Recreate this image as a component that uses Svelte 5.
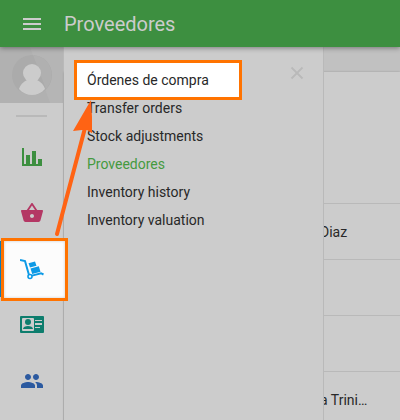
<script>
  const menu = [
    'Órdenes de compra',
    'Transfer orders',
    'Stock adjustments',
    'Proveedores',
    'Inventory history',
    'Inventory valuation'
  ];
  const suppliers = ['Diaz', '', '', 'a Trini…'];

  let current = $state('Proveedores');
</script>

<div class="app">
  <header>
    <button class="burger" aria-label="Menu">
      <svg width="24" height="24" viewBox="0 0 24 24"><path d="M3 6h18v2H3zM3 11h18v2H3zM3 16h18v2H3z" fill="#cccccc" /></svg>
    </button>
    <h1>Proveedores</h1>
  </header>

  <div class="body">
    <nav class="rail" aria-label="Sections">
      <a class="profile" href="#profile" aria-label="Profile">
        <svg width="63" height="56" viewBox="0 0 63 56">
          <rect width="63" height="56" fill="#b1b1b1" />
          <path d="M30 0h33v56H50z" fill="#b5b5b5" />
          <circle cx="32" cy="28" r="20" fill="#ababab" />
          <path d="M33 8a20 20 0 0 1 13 34z" fill="#b0b0b0" />
          <circle cx="32" cy="26" r="9" fill="#cccccc" />
          <path d="M27 33h10c4 2 7 5 8 9c-7 8 -19 8 -26 0c1 -4 4 -7 8 -9z" fill="#cccccc" />
        </svg>
      </a>
      <hr />
      <a class="item" href="#reports" aria-label="Reports">
        <svg width="24" height="24" viewBox="0 0 24 24" fill="#3d8f40"><path d="M2 3h2v16h18v2H2zM6 10h4v9H6zM12 6h4v13h-4zM18 14h4v5h-4z" /></svg>
      </a>
      <a class="item" href="#items" aria-label="Items">
        <svg width="24" height="24" viewBox="0 0 24 24" fill="#b43764"><path d="M17.21 9l-4.38-6.56c-.19-.28-.51-.42-.83-.42-.32 0-.64.14-.83.43L6.79 9H2c-.55 0-1 .45-1 1 0 .09.01.18.04.27l2.54 9.27c.23.84 1 1.46 1.92 1.46h13c.92 0 1.69-.62 1.93-1.46l2.54-9.27L23 10c0-.55-.45-1-1-1h-4.79zM9 9l3-4.4L15 9H9zm3 8c-1.1 0-2-.9-2-2s.9-2 2-2 2 .9 2 2-.9 2-2 2z" /></svg>
      </a>
      <a class="item selected" href="#inventory" aria-label="Inventory">
        <svg width="24" height="24" viewBox="0 0 24 24" fill="#0d9ae6">
          <path d="M0 3l5 1 4 14" fill="none" stroke="#0d9ae6" stroke-width="2" />
          <path d="M8.500 6.200l6.500-1.700 1.500 4.200-6.500 1.700zM10.500 11.500l8.300-2.300 1.700 5.600-8.300 2.200z" />
          <circle cx="10" cy="19.500" r="2" fill="none" stroke="#0d9ae6" stroke-width="1.600" />
          <path d="M12 18.600l9-2.400 2.500 1.300" fill="none" stroke="#0d9ae6" stroke-width="2" />
        </svg>
      </a>
      <a class="item" href="#employees" aria-label="Employees">
        <svg width="24" height="24" viewBox="0 0 24 24">
          <rect y="3" width="24" height="17" rx="1" fill="#0d7d6d" />
          <rect x="2" y="5" width="12" height="13" rx="1" fill="#cccccc" />
          <circle cx="8" cy="9" r="3" fill="#0d7d6d" />
          <path d="M3 16c0-4 10-4 10 0z" fill="#0d7d6d" />
          <path d="M15 7h7v1h-7zM15 10h7v2h-7zM15 14h5v1h-5z" fill="#cccccc" />
        </svg>
      </a>
      <a class="item" href="#customers" aria-label="Customers">
        <svg width="24" height="24" viewBox="0 0 24 24" fill="#2c5aa0"><path d="M16 11c1.660 0 2.990-1.340 2.990-3S17.660 5 16 5c-1.660 0-3 1.340-3 3s1.340 3 3 3zm-8 0c1.660 0 2.990-1.340 2.990-3S9.660 5 8 5C6.340 5 5 6.340 5 8s1.340 3 3 3zm0 2c-2.330 0-7 1.170-7 3.500V19h14v-2.500c0-2.330-4.670-3.500-7-3.500zm8 0c-.29 0-.62.02-.97.05 1.160.84 1.970 1.970 1.970 3.450V19h6v-2.500c0-2.330-4.670-3.500-7-3.500z" /></svg>
      </a>
    </nav>

    <main>
      <div class="card">
        <div class="toolbar"></div>
        <table aria-label="Proveedores">
          <tbody>
            {#each suppliers as name}
              <tr><td>{name}</td></tr>
            {/each}
          </tbody>
        </table>
      </div>

      <!-- submenu slides over the list -->
      <aside class="submenu">
        <ul>
          {#each menu as entry}
            <li><a href="#submenu" class:active={entry === current} onclick={() => (current = entry)}>{entry}</a></li>
          {/each}
        </ul>
        <button class="close" aria-label="Close">
          <svg width="14" height="14" viewBox="0 0 14 14"><path d="M1.500 1.500l11 11M12.500 1.500l-11 11" stroke="#b9b9b9" stroke-width="1.800" /></svg>
        </button>
      </aside>
    </main>
  </div>

  <!-- tutorial callouts -->
  <div class="callout step-one"></div>
  <div class="callout step-two"></div>
  <svg class="arrow" width="40" height="140" viewBox="0 0 40 140">
    <path d="M5 134L33 28" stroke="#ff6314" stroke-width="4" stroke-linecap="round" />
    <path d="M39 0L21 31l9-1 5 0 6 4z" fill="#ff6314" />
  </svg>
</div>

<style>
  :global(body) {
    margin: 0;
    background: #cccccc;
  }

  .app {
    position: relative;
    display: flex;
    flex-direction: column;
    min-height: 100vh;
    overflow: hidden;
    font-family: Roboto, 'Liberation Sans', sans-serif;
    font-size: 14px;
    color: #282828;
  }

  header {
    position: relative;
    z-index: 2;
    display: flex;
    align-items: center;
    gap: 20px;
    height: 47px;
    padding-left: 20px;
    background: #3d8f40;
    box-shadow: 0 1px 5px rgba(0, 0, 0, 0.4);
  }

  h1 {
    margin: 0;
    font-size: 20px;
    font-weight: 400;
    line-height: 24px;
    color: #cccccc;
  }

  button {
    display: flex;
    padding: 0;
    border: 0;
    background: none;
    cursor: pointer;
  }

  .body {
    display: flex;
    flex: 1;
  }

  .rail {
    width: 63px;
    border-right: 1px solid #b9b9b9;
    background: #cccccc;
  }

  .profile {
    display: block;
    height: 56px;
  }

  hr {
    width: 31px;
    height: 2px;
    margin: 12px auto;
    border: 0;
    background: #b9b9b9;
  }

  .item {
    display: flex;
    align-items: center;
    justify-content: center;
    height: 56px;
  }

  .selected {
    background: #fcfcfc;
    box-shadow: inset 2px 0 #0d7bb8;
  }

  /* keeps the icon above the highlight */
  .selected svg {
    position: relative;
    z-index: 4;
  }

  main {
    position: relative;
    flex: 1;
    padding-top: 25px;
    background: #c1c1c1;
  }

  .card {
    height: 100%;
    background: #cccccc;
    box-shadow: 0 0 2px rgba(0, 0, 0, 0.2);
  }

  .toolbar {
    height: 131px;
  }

  table {
    width: 100%;
    border-collapse: collapse;
  }

  td {
    height: 55px;
    padding: 0 0 0 256px;
    border-top: 1px solid #b9b9b9;
    white-space: nowrap;
  }

  .submenu {
    position: absolute;
    top: 0;
    bottom: 0;
    left: 0;
    display: flex;
    align-items: flex-start;
    justify-content: space-between;
    box-sizing: border-box;
    width: 260px;
    padding: 19px 19px 0 23px;
    border-right: 1px solid #b9b9b9;
    background: #cccccc;
  }

  ul {
    margin: 0;
    padding: 0;
    list-style: none;
  }

  li a {
    display: block;
    line-height: 28px;
    color: inherit;
    text-decoration: none;
  }

  li:first-child a {
    position: relative;
    z-index: 4;
  }

  li .active {
    color: #459a3f;
  }

  .callout {
    position: absolute;
    z-index: 3;
    box-sizing: border-box;
    border: 3px solid #ff7300;
    pointer-events: none;
  }

  .step-one {
    top: 238px;
    left: 1px;
    width: 67px;
    height: 63px;
    background: #fcfcfc;
    box-shadow: inset 0 0 3px rgba(0, 0, 0, 0.2);
  }

  .step-two {
    top: 60px;
    left: 74px;
    width: 168px;
    height: 40px;
    background: #ffffff;
  }

  .arrow {
    position: absolute;
    top: 100px;
    left: 52px;
    z-index: 3;
    pointer-events: none;
  }
</style>
